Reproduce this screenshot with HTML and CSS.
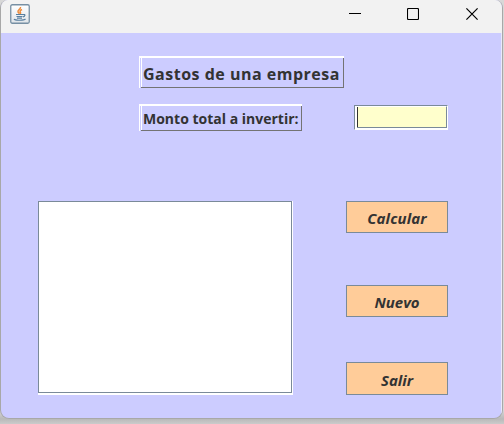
FILE: index.html
```
<!DOCTYPE html>
<html lang="es">
<head>
<meta charset="utf-8">
<title>Gastos de una empresa</title>
<link rel="stylesheet" href="styles.css">
</head>
<body>
<div class="window">
  <header class="titlebar">
    <svg class="java" width="20" height="20" viewBox="0 0 20 20" fill="none">
      <defs><linearGradient id="g" x2="0" y2="1"><stop stop-color="#fff"/><stop offset="1" stop-color="#dfe4e9"/></linearGradient></defs>
      <rect x=".75" y=".75" width="18.5" height="18.5" rx="1.5" fill="url(#g)" stroke="#7790a4" stroke-width="1.3"/>
      <path d="M10.5 3C11 5 7.500 6 8 7.700c.2.8 1 1.300 1.300 2M12 5.500c-2 1-2.300 1.800-1.600 2.800.4.6.1 1.200-.4 1.500" stroke="#ee8c3c" stroke-width="1.500"/>
      <path d="M6 10.500h7.500M6.500 12.500h6M7 14.200h5M13.300 10.600c2.300-.7 2 1.900-.3 2.300M4 15.200c1 1.500 10 1.300 11.500-.2" stroke="#587f9f" stroke-width="1.200"/>
    </svg>
    <div class="controls">
      <svg width="12" height="12" viewBox="0 0 12 12"><path d="M0 5.500h12" stroke="#000"/></svg>
      <svg width="12" height="12" viewBox="0 0 12 12"><rect x=".5" y=".5" width="11" height="11" rx="1" fill="none" stroke="#000" stroke-width="1.100"/></svg>
      <svg class="close" width="12" height="12" viewBox="0 0 12 12"><path d="M.4.4l11.200 11.200M11.600.4L.4 11.600" stroke="#000" stroke-width="1.200"/></svg>
    </div>
  </header>
  <main class="content">
    <h1 class="etched heading"><span class="etched-inner"><span class="heading-text">Gastos de una empresa</span></span></h1>
    <div class="amount-row">
      <label class="etched amount"><span class="etched-inner"><span class="amount-text">Monto total a invertir:</span></span></label>
      <div class="field"><div class="field-inner"></div></div>
    </div>
    <div class="lower">
      <div class="results"><div class="results-inner"></div></div>
      <div class="actions">
        <button class="calc">Calcular</button>
        <button class="new">Nuevo</button>
        <button class="exit">Salir</button>
      </div>
    </div>
  </main>
</div>
</body>
</html>
```
FILE: styles.css
```
* { box-sizing: border-box; }
body {
  margin: 0;
  height: 424px;
  overflow: hidden;
  background: linear-gradient(#d8d8d8 0, #d8d8d8 410px, #b9b9b9 419px, #cbcbcb 424px);
  font-family: "Open Sans", "Noto Sans", sans-serif;
  color: #333;
}
.window {
  width: 503px;
  height: 419px;
  border: 1px solid #a8a8a8;
  border-top: 0;
  border-radius: 8px 8px 9px 9px;
  overflow: hidden;
  background: #ccf;
}
.titlebar {
  height: 33px;
  display: flex;
  justify-content: space-between;
  padding: 4px 24px 0 9px;
  background: #f2f2f2;
}
.controls { display: flex; gap: 46px; padding-top: 4px; }
.controls svg, .java { display: block; }
.controls .close { margin-left: 1px; }
.content {
  height: 385px;
  padding: 23px 0 0 37px;
  border-right: 1px solid #e9e9fb;
}
.etched {
  display: block;
  margin: 0 0 0 101px;
  padding-left: 1px;
  border-left: 1px solid #fff;
  border-top: 2px solid #fff;
}
.etched-inner {
  display: block;
  height: 100%;
  border: solid #737373;
  border-width: 0 1px 1px 0;
  box-shadow: inset 1px 0 #fff;
  white-space: nowrap;
  font-weight: 700;
}
.heading { width: 205px; height: 32px; }
.heading .etched-inner { padding-left: 2px; font-size: 16px; line-height: 33px; }
.heading-text { letter-spacing: .5px; }
.amount-row { display: flex; margin-top: 16px; height: 27px; }
.amount { width: 163px; height: 27px; }
.amount .etched-inner { padding-left: 2px; font-size: 14px; line-height: 25px; }
.amount-text { letter-spacing: 0; }
.field {
  width: 94px;
  height: 25px;
  margin: 1px 0 0 52px;
  border: 1px solid #fff;
  border-top-color: #7a8a99;
  border-left-color: #7a8a99;
  padding-bottom: 1px;
  background: #fff;
}
.field-inner {
  height: 22px;
  margin-left: 2px;
  border: 1px solid #7a8a99;
  border-width: 0 1px 1px 0;
  border-top: 1px solid #fff;
  background: #ffc;
  box-shadow: inset 1px 0 #333;
}
.lower { display: flex; margin-top: 70px; }
.results {
  width: 255px;
  height: 194px;
  padding: 0 1px 2px 0;
  background: #fff;
}
.results-inner {
  height: 192px;
  border: 1px solid #7a8a99;
  background: #fff;
}
.actions { width: 102px; margin-left: 53px; }
button {
  display: block;
  width: 102px;
  height: 32px;
  padding: 2px 0 0;
  border: 1px solid #7a8a99;
  background: #fc9;
  color: #333;
  font: italic 700 15px/20px "Open Sans", "Noto Sans", sans-serif;
}
.calc { letter-spacing: .1px; }
.new { margin-top: 52px; }
.exit { margin-top: 45px; height: 33px; }
```
